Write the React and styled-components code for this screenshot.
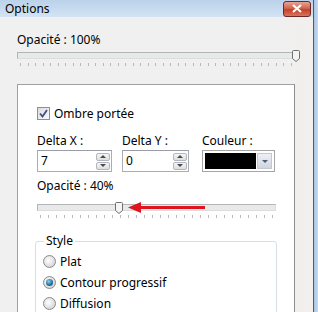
import styled, { createGlobalStyle } from "styled-components";

const GlobalStyle = createGlobalStyle`
  html, body {
    margin: 0;
    padding: 0;
    width: 318px;
    height: 312px;
    overflow: hidden;
    background: #f0f0f0;
  }
  body {
    font-family: "Noto Sans", "Open Sans", sans-serif;
    font-size: 12px;
    color: #000;
  }
`;

const Window = styled.div`
  display: flex;
  width: 318px;
  height: 312px;
  overflow: hidden;
`;

const Main = styled.div`
  flex: 1;
  display: flex;
  flex-direction: column;
  min-width: 0;
`;

const RightFrame = styled.div`
  width: 5px;
  background: linear-gradient(to right, #40607e 0 1px, #a9c4e0 1px, #c7dbef);
`;

const TitleBar = styled.div`
  height: 20px;
  display: flex;
  align-items: center;
  justify-content: space-between;
  padding: 0 2px 0 5px;
  background: linear-gradient(#bcd2ea, #c9dcf0 60%, #d3e3f3);
  font-size: 12px;
`;

const CloseButton = styled.div`
  width: 26px;
  height: 14px;
  border: 1px solid #6d2a22;
  border-radius: 3px;
  background: linear-gradient(#e8a393, #d2644f 45%, #c2412a 55%, #d9745b);
  display: flex;
  align-items: center;
  justify-content: center;
`;

const Body = styled.div`
  flex: 1;
  padding: 15px 0 0 17px;
  background: linear-gradient(to right, #f0f0f0 280px, #f2efed);
`;

const Label = styled.div`
  line-height: 16px;
  height: 16px;
  white-space: nowrap;
`;

const SliderWrap = styled.div`
  position: relative;
  width: ${(p) => p.$width}px;
  margin-top: ${(p) => p.$top}px;
`;

const Track = styled.div`
  height: 7px;
  box-sizing: border-box;
  border: 1px solid #b4b4b4;
  border-right-color: #dcdcdc;
  border-bottom-color: #dcdcdc;
  background: #e7eaea;
`;

const Thumb = styled.svg`
  position: absolute;
  top: -2px;
`;

const Ticks = styled.div`
  display: flex;
  justify-content: space-between;
  margin-top: 4px;
  padding: 0 3px;
  height: 3px;
`;

const Tick = styled.span`
  width: 1px;
  height: 3px;
  background: #b8b8b8;
`;

const Panel = styled.div`
  margin-top: 18px;
  width: 278px;
  height: 240px;
  box-sizing: border-box;
  background: #fff;
  border: 1px solid #a0a0a0;
  border-right-color: #8c8c8c;
  padding: 20px 0 0 19px;
`;

const CheckRow = styled.div`
  display: flex;
  align-items: center;
  gap: 4px;
  height: 16px;
`;

const CheckBox = styled.div`
  width: 13px;
  height: 13px;
  box-sizing: border-box;
  border: 1px solid #8f8f8f;
  background: linear-gradient(135deg, #dcdcdc, #fafafa);
  display: flex;
  align-items: center;
  justify-content: center;
`;

const FieldsRow = styled.div`
  display: flex;
  margin-top: 12px;
`;

const Field = styled.div`
  width: ${(p) => p.$width}px;
  margin-right: ${(p) => p.$gap || 0}px;
`;

const SpinBox = styled.div`
  margin-top: 1px;
  height: 22px;
  box-sizing: border-box;
  border: 1px solid #abadb3;
  border-top-color: #9a9da5;
  display: flex;
  align-items: center;
  padding: 0 1px 0 3px;
  background: #fff;
`;

const SpinValue = styled.span`
  flex: 1;
  line-height: 16px;
`;

const SpinButtons = styled.div`
  display: flex;
  flex-direction: column;
  gap: 1px;
`;

const SpinButton = styled.div`
  width: 14px;
  height: 8px;
  box-sizing: border-box;
  border: 1px solid #b2b7bf;
  border-radius: 2px;
  background: linear-gradient(#f6f6f6, #dedede);
  display: flex;
  align-items: center;
  justify-content: center;
`;

const ColorBox = styled.div`
  margin-top: 1px;
  height: 22px;
  box-sizing: border-box;
  border: 1px solid #a5a5a5;
  display: flex;
  padding: 2px;
  gap: 1px;
  background: #fff;
`;

const Swatch = styled.div`
  flex: 1;
  background: ${(p) => p.$color};
`;

const DropButton = styled.div`
  width: 15px;
  border: 1px solid #c3c8d0;
  box-sizing: border-box;
  background: linear-gradient(#eef0f6, #cfd4de);
  display: flex;
  align-items: center;
  justify-content: center;
`;

const OpacityLabel = styled(Label)`
  margin-top: 6px;
`;

const Arrow = styled.svg`
  position: absolute;
  left: 91px;
  top: -2px;
`;

const GroupBox = styled.fieldset`
  margin: 16px 0 0 -2px;
  width: 242px;
  height: 90px;
  box-sizing: border-box;
  border: 1px solid #d5dfe5;
  border-radius: 3px;
  padding: 3px 0 0 7px;
  legend {
    padding: 0 2px;
    margin-left: 1px;
    line-height: 14px;
  }
`;

const RadioRow = styled.div`
  display: flex;
  align-items: center;
  gap: 4px;
  height: 21px;
`;

const Radio = styled.div`
  width: 13px;
  height: 13px;
  box-sizing: border-box;
  border-radius: 50%;
  border: 1px solid #8a8a8a;
  background: radial-gradient(circle at 40% 40%, #ffffff, #d3d3d3 80%);
  display: flex;
  align-items: center;
  justify-content: center;
`;

const RadioDot = styled.div`
  width: 7px;
  height: 7px;
  border-radius: 50%;
  background: radial-gradient(circle at 40% 35%, #8fd0f0, #1d6c98 60%, #0e3f5e);
`;

function Slider({ width, thumb, top, ticks, children }) {
  return (
    <SliderWrap $width={width} $top={top}>
      <Track />
      <Thumb width="8" height="12" viewBox="0 0 8 12" style={{ left: thumb }}>
        <path
          d="M0.5 1.5 Q0.5 0.5 1.5 0.5 H6.5 Q7.5 0.5 7.5 1.5 V8.5 L4 11.5 L0.5 8.5 Z"
          fill="#f4f4f4"
          stroke="#6f6f6f"
        />
      </Thumb>
      <Ticks>
        {Array.from({ length: ticks }, (_, i) => (
          <Tick key={i} />
        ))}
      </Ticks>
      {children}
    </SliderWrap>
  );
}

function SpinField({ value }) {
  return (
    <SpinBox>
      <SpinValue>{value}</SpinValue>
      <SpinButtons>
        <SpinButton>
          <svg width="6" height="3" viewBox="0 0 6 3">
            <path d="M0 3 L3 0 L6 3 Z" fill="#4a4a4a" />
          </svg>
        </SpinButton>
        <SpinButton>
          <svg width="6" height="3" viewBox="0 0 6 3">
            <path d="M0 0 L3 3 L6 0 Z" fill="#4a4a4a" />
          </svg>
        </SpinButton>
      </SpinButtons>
    </SpinBox>
  );
}

export default function App() {
  return (
    <>
      <GlobalStyle />
      <Window>
        <Main>
          <TitleBar>
            <span>Options</span>
            <CloseButton>
              <svg width="10" height="9" viewBox="0 0 10 9">
                <path d="M1 1 L9 8 M9 1 L1 8" stroke="#fff" strokeWidth="2.2" />
              </svg>
            </CloseButton>
          </TitleBar>
          <Body>
            <Label>Opacité : 100%</Label>
            <Slider width={278} thumb={275} top={4} ticks={37} />

            <Panel>
              <CheckRow>
                <CheckBox>
                  <svg width="9" height="9" viewBox="0 0 9 9">
                    <path
                      d="M1 4.5 L3.5 7.5 L8 1"
                      fill="none"
                      stroke="#3d4f8a"
                      strokeWidth="1.8"
                    />
                  </svg>
                </CheckBox>
                <span>Ombre portée</span>
              </CheckRow>

              <FieldsRow>
                <Field $width={75} $gap={10}>
                  <Label>Delta X :</Label>
                  <SpinField value="7" />
                </Field>
                <Field $width={67} $gap={13}>
                  <Label>Delta Y :</Label>
                  <SpinField value="0" />
                </Field>
                <Field $width={73}>
                  <Label>Couleur :</Label>
                  <ColorBox>
                    <Swatch $color="#000" />
                    <DropButton>
                      <svg width="6" height="3" viewBox="0 0 6 3">
                        <path d="M0 0 L3 3 L6 0 Z" fill="#4d5a78" />
                      </svg>
                    </DropButton>
                  </ColorBox>
                </Field>
              </FieldsRow>

              <OpacityLabel>Opacité : 40%</OpacityLabel>
              <Slider width={239} thumb={78} top={10} ticks={30}>
                <Arrow width="78" height="11" viewBox="0 0 78 11">
                  <path d="M12 5.5 H77" stroke="#e0141c" strokeWidth="3" />
                  <path d="M0 5.5 L13 0 L13 11 Z" fill="#e0141c" />
                </Arrow>
              </Slider>

              <GroupBox>
                <legend>Style</legend>
                <RadioRow>
                  <Radio />
                  <span>Plat</span>
                </RadioRow>
                <RadioRow>
                  <Radio>
                    <RadioDot />
                  </Radio>
                  <span>Contour progressif</span>
                </RadioRow>
                <RadioRow>
                  <Radio />
                  <span>Diffusion</span>
                </RadioRow>
              </GroupBox>
            </Panel>
          </Body>
        </Main>
        <RightFrame />
      </Window>
    </>
  );
}
